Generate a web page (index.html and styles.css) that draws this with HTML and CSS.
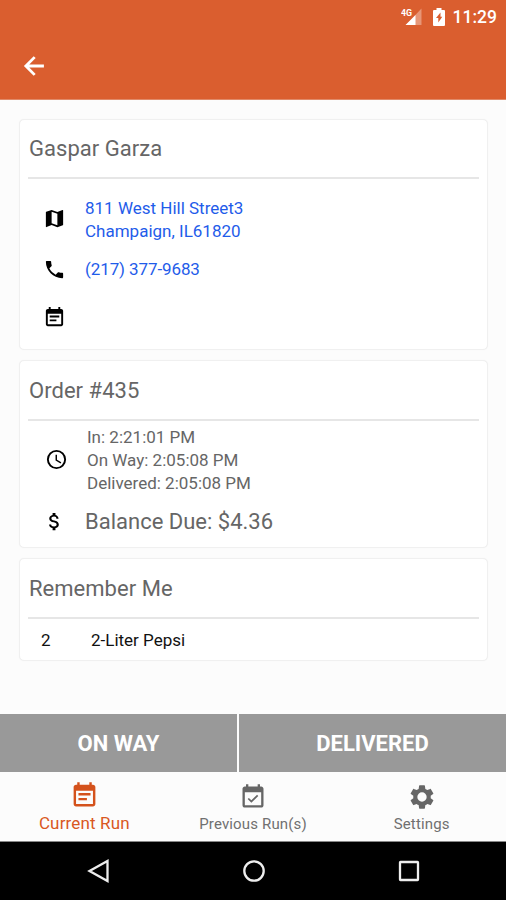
FILE: index.html
```html
<!DOCTYPE html>
<html lang="en">
<head>
    <meta charset="UTF-8">
    <meta name="viewport" content="width=device-width, initial-scale=1.0">
    <title>Current Run</title>
    <link rel="stylesheet" href="styles.css">
</head>
<body>

<header class="header">
    <div class="status-bar">
        <svg class="signal" width="22" height="18" viewBox="0 0 22 18">
            <path d="M20.500 0.500V17H5Z" fill="#fff" fill-opacity="0.35"/>
            <path d="M14.500 7V17H4.500Z" fill="#fff"/>
            <text x="0" y="7.500" class="signal-label" textLength="11" lengthAdjust="spacingAndGlyphs">4G</text>
        </svg>
        <svg class="battery" width="12" height="18" viewBox="0 0 12 18">
            <path d="M1 2H3.500V0H8.500V2H11Q12 2 12 3V17Q12 18 11 18H1Q0 18 0 17V3Q0 2 1 2Z" fill="#fff"/>
            <path d="M7.500 4.500L3 10H5.300V14.500L9.300 8.800H7.500Z" fill="#da5e2f"/>
        </svg>
        <span class="time">11:29</span>
    </div>
    <div class="toolbar">
        <svg width="28" height="28" viewBox="0 0 24 24" fill="none" stroke="#fff" stroke-width="2.4">
            <path d="M20.500 12H5M12.600 4.400L5 12L12.600 19.600"/>
        </svg>
    </div>
</header>

<main class="content">
    <section class="card customer">
        <h2>Gaspar Garza</h2>
        <div class="row address">
            <svg class="icon" viewBox="0 0 24 24"><path d="M20.500 3l-.16.03L15 5.100 9 3 3.360 4.900c-.21.07-.36.25-.36.48V20.500c0 .28.22.5.5.5l.16-.03L9 18.900l6 2.100 5.640-1.900c.21-.07.36-.25.36-.48V3.500c0-.28-.22-.5-.5-.5zM15 19l-6-2.110V5l6 2.110V19z"/></svg>
            <a href="#">811 West Hill Street3<br>Champaign, IL61820</a>
        </div>
        <div class="row phone">
            <svg class="icon" viewBox="0 0 24 24"><path d="M6.620 10.790c1.440 2.830 3.760 5.140 6.590 6.590l2.200-2.200c.27-.27.67-.36 1.020-.24 1.120.37 2.330.57 3.570.57.55 0 1 .45 1 1V20c0 .55-.45 1-1 1-9.390 0-17-7.610-17-17 0-.55.45-1 1-1h3.500c.55 0 1 .45 1 1 0 1.250.2 2.450.57 3.570.11.35.03.74-.25 1.020l-2.200 2.200z"/></svg>
            <a href="#">(217) 377-9683</a>
        </div>
        <div class="row note">
            <svg class="icon" viewBox="0 0 24 24"><path d="M17 10H7v2h10v-2zm2-7h-1V1h-2v2H8V1H6v2H5c-1.110 0-2 .9-2 2v14c0 1.100.89 2 2 2h14c1.100 0 2-.9 2-2V5c0-1.100-.9-2-2-2zm0 16H5V8h14v11zm-5-5H7v2h7v-2z"/></svg>
        </div>
    </section>

    <section class="card order">
        <h2>Order #435</h2>
        <div class="row times">
            <svg class="icon" viewBox="0 0 24 24"><path d="M12 2a10 10 0 1 0 0 20a10 10 0 1 0 0-20zM12 20a8 8 0 1 1 0-16a8 8 0 1 1 0 16zM12.500 7H11v6l5.250 3.150.75-1.230-4.500-2.670z"/></svg>
            <p>In: 2:21:01 PM<br>On Way: 2:05:08 PM<br>Delivered: 2:05:08 PM</p>
        </div>
        <div class="row balance">
            <svg class="icon" viewBox="0 0 24 24"><path d="M11.800 10.900c-2.270-.59-3-1.200-3-2.150 0-1.090 1.010-1.850 2.700-1.850 1.780 0 2.440.85 2.500 2.100h2.210c-.07-1.720-1.120-3.300-3.210-3.810V3h-3v2.160c-1.940.42-3.500 1.680-3.500 3.610 0 2.310 1.910 3.460 4.700 4.130 2.500.6 3 1.480 3 2.410 0 .69-.49 1.790-2.700 1.790-2.060 0-2.870-.92-2.980-2.100h-2.200c.12 2.190 1.760 3.420 3.680 3.830V21h3v-2.150c1.950-.37 3.500-1.500 3.500-3.550 0-2.840-2.430-3.810-4.700-4.400z"/></svg>
            <p>Balance Due: $4.36</p>
        </div>
    </section>

    <section class="card items">
        <h2>Remember Me</h2>
        <div class="item">
            <span class="qty">2</span>
            <span>2-Liter Pepsi</span>
        </div>
    </section>
</main>

<div class="actions">
    <button>ON WAY</button>
    <button>DELIVERED</button>
</div>

<nav class="tabs">
    <a class="tab active" href="#">
        <svg width="29" height="29" viewBox="0 0 24 24"><path d="M17 10H7v2h10v-2zm2-7h-1V1h-2v2H8V1H6v2H5c-1.110 0-2 .9-2 2v14c0 1.100.89 2 2 2h14c1.100 0 2-.9 2-2V5c0-1.100-.9-2-2-2zm0 16H5V8h14v11zm-5-5H7v2h7v-2z"/></svg>
        <span>Current Run</span>
    </a>
    <a class="tab" href="#">
        <svg width="28" height="28" viewBox="0 0 24 24"><path d="M16.530 11.060L15.470 10l-4.880 4.880-2.120-2.120-1.060 1.060L10.590 17l5.940-5.940zM19 3h-1V1h-2v2H8V1H6v2H5c-1.110 0-2 .9-2 2v14c0 1.100.89 2 2 2h14c1.100 0 2-.9 2-2V5c0-1.100-.9-2-2-2zm0 16H5V8h14v11z"/></svg>
        <span>Previous Run(s)</span>
    </a>
    <a class="tab" href="#">
        <svg width="28" height="28" viewBox="0 0 24 24"><path fill-rule="evenodd" d="M19.430 12.980c.04-.32.07-.64.07-.98s-.03-.66-.07-.98l2.110-1.650c.19-.15.24-.42.12-.64l-2-3.460c-.12-.22-.39-.3-.61-.22l-2.490 1c-.52-.4-1.080-.73-1.690-.98l-.38-2.650C14.460 2.180 14.250 2 14 2h-4c-.25 0-.46.18-.49.42l-.38 2.650c-.61.25-1.170.59-1.690.98l-2.490-1c-.23-.09-.49 0-.61.22l-2 3.460c-.13.22-.07.49.12.64l2.110 1.650c-.04.32-.07.65-.07.98s.03.66.07.98l-2.110 1.650c-.19.15-.24.42-.12.64l2 3.460c.12.22.39.3.61.22l2.490-1c.52.4 1.080.73 1.690.98l.38 2.650c.03.24.24.42.49.42h4c.25 0 .46-.18.49-.42l.38-2.650c.61-.25 1.170-.59 1.690-.98l2.490 1c.23.09.49 0 .61-.22l2-3.460c.12-.22.07-.49-.12-.64zM12 16a4 4 0 1 1 0-8a4 4 0 1 1 0 8z"/></svg>
        <span>Settings</span>
    </a>
</nav>

<footer class="nav-bar">
    <svg width="24" height="26" viewBox="0 0 24 26"><path d="M20.500 3V23L2.500 13Z"/></svg>
    <svg width="24" height="26" viewBox="0 0 24 26"><circle cx="12" cy="13" r="9.700"/></svg>
    <svg width="24" height="26" viewBox="0 0 24 26"><rect x="3" y="4" width="18" height="18" rx="0.500"/></svg>
</footer>

</body>
</html>
```

FILE: styles.css
```css
* {
    box-sizing: border-box;
}
body {
    display: flex;
    flex-direction: column;
    height: 900px;
    margin: 0;
    background-color: #fcfcfc;
    font-family: Roboto, sans-serif;
    color: #666;
}
h2, p {
    margin: 0;
    font-weight: 400;
}
a {
    text-decoration: none;
}
.header {
    height: 100px;
    background-color: #da5e2f;
    border-bottom: 1px solid #e08a69;
}
.status-bar {
    display: flex;
    align-items: center;
    justify-content: flex-end;
    height: 33px;
    padding-right: 9px;
    color: white;
}
.signal-label {
    font-size: 9px;
    font-weight: 700;
    fill: white;
}
.battery {
    margin: 0 8px 0 10px;
}
.time {
    font-size: 17.5px;
    font-weight: 500;
}
.toolbar {
    display: flex;
    align-items: center;
    height: 66px;
    padding-left: 20px;
}
.content {
    display: flex;
    flex-direction: column;
    gap: 10px;
    height: 614px;
    padding: 19px 18px 0 19px;
}
.card {
    padding: 0 8px;
    background-color: white;
    border: 1px solid #f0f0f0;
    border-radius: 5px;
    box-shadow: 0 0 1px #eee;
}
.card h2 {
    height: 59px;
    padding-left: 1px;
    border-bottom: 2px solid #e6e6e6;
    font-size: 22px;
    line-height: 58px;
    letter-spacing: 0.03px;
}
.customer {
    height: 231px;
}
.order {
    height: 188px;
}
.order h2, .items h2 {
    line-height: 60px;
    height: 60px;
}
.items {
    height: 103px;
}
.row {
    display: flex;
    align-items: center;
    padding-left: 15px;
    font-size: 17px;
    line-height: 23px;
}
.row a {
    color: #1f5cea;
}
.phone a {
    letter-spacing: -0.1px;
}
.icon {
    width: 23px;
    height: 23px;
    margin-right: 19px;
    fill: black;
}
.address {
    margin-top: 18px;
}
.address .icon {
    margin-bottom: 3px;
}
.phone {
    margin-top: 15px;
}
.note {
    margin-top: 25px;
}
.times {
    margin-top: 5px;
    padding-left: 17px;
}
.times .icon {
    margin-bottom: 3px;
}
.balance {
    margin-top: 15px;
    font-size: 22px;
}
.item {
    display: flex;
    align-items: center;
    height: 42px;
    padding-left: 13px;
    font-size: 17px;
    color: #111;
}
.qty {
    width: 50px;
}
.actions {
    display: grid;
    grid-template-columns: 237px 1fr;
    gap: 2px;
    height: 58px;
}
.actions button {
    border: none;
    background-color: #999;
    font-family: inherit;
    font-size: 22px;
    font-weight: 700;
    color: white;
}
.tabs {
    display: grid;
    grid-template-columns: repeat(3, 1fr);
    height: 70px;
    border-bottom: 1px solid #888;
}
.tab {
    display: flex;
    flex-direction: column;
    align-items: center;
    padding-top: 11px;
    font-size: 15px;
    color: #707070;
}
.tab svg {
    fill: #666;
}
.tab span {
    margin-top: 4px;
    letter-spacing: 0.15px;
}
.tab.active {
    padding-top: 9px;
    font-size: 17px;
    color: #d95722;
}
.tab.active svg {
    fill: #d4521c;
}
.tab.active span {
    margin-top: 3px;
}
.nav-bar {
    display: flex;
    align-items: center;
    justify-content: space-between;
    height: 58px;
    padding: 0 85px 0 87px;
    background-color: black;
}
.nav-bar svg {
    fill: none;
    stroke: #eee;
    stroke-width: 2.3;
}
```
